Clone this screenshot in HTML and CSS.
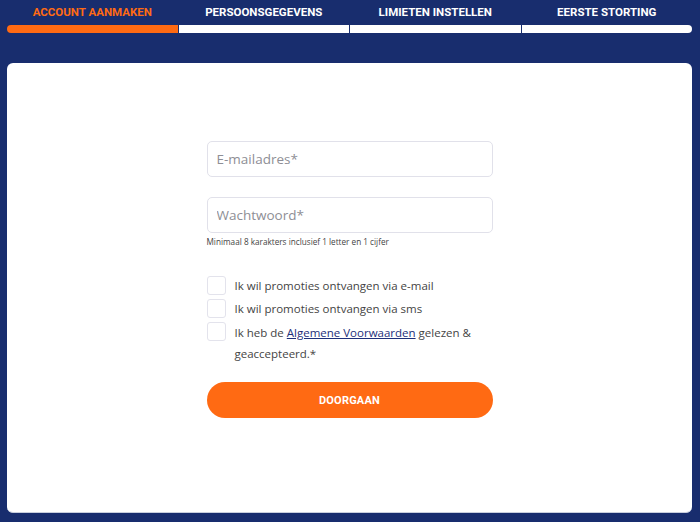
FILE: index.html
```html
<!DOCTYPE html>
<html lang="nl">
<head>
<meta charset="utf-8">
<title>Account aanmaken</title>
<link rel="stylesheet" href="styles.css">
</head>
<body>
<div class="page">
  <nav class="steps">
    <div class="step active"><span class="step-label">ACCOUNT AANMAKEN</span><span class="step-bar"></span></div>
    <div class="step"><span class="step-label">PERSOONSGEGEVENS</span><span class="step-bar"></span></div>
    <div class="step"><span class="step-label">LIMIETEN INSTELLEN</span><span class="step-bar"></span></div>
    <div class="step last"><span class="step-label">EERSTE STORTING</span><span class="step-bar"></span></div>
  </nav>
  <main class="card">
    <form class="form">
      <input class="field" type="email" placeholder="E-mailadres*">
      <input class="field field-pw" type="password" placeholder="Wachtwoord*">
      <p class="hint">Minimaal 8 karakters inclusief 1 letter en 1 cijfer</p>
      <div class="checks">
        <label class="check"><span class="box"></span><span class="check-text">Ik wil promoties ontvangen via e-mail</span></label>
        <label class="check"><span class="box"></span><span class="check-text">Ik wil promoties ontvangen via sms</span></label>
        <label class="check"><span class="box"></span><span class="check-text multi">Ik heb de <a href="#" class="link">Algemene Voorwaarden</a> gelezen &amp; geaccepteerd.*</span></label>
      </div>
      <button type="button" class="btn">DOORGAAN</button>
    </form>
  </main>
</div>
</body>
</html>
```
FILE: styles.css
```css
* { box-sizing: border-box; }
html, body { margin: 0; padding: 0; }
body {
  background: #182d6e;
  font-family: "Open Sans", "Liberation Sans", sans-serif;
  width: 700px;
  height: 522px;
  overflow: hidden;
}
.page { padding: 0 8px 0 7px; }
.steps {
  display: grid;
  grid-template-columns: repeat(4, 1fr);
  column-gap: 1px;
}
.step { display: flex; flex-direction: column; align-items: stretch; }
.step-label {
  height: 25px;
  line-height: 25px;
  text-align: center;
  color: #ffffff;
  font-family: "Roboto", "Liberation Sans", sans-serif;
  font-weight: 700;
  font-size: 11.5px;
}
.step.active .step-label { color: #ff6a13; }
.step-bar { height: 8px; background: #ffffff; }
.step.active .step-bar { background: #ff6a13; border-radius: 4px 0 0 4px; }
.step.last .step-bar { border-radius: 0 4px 4px 0; }
.card {
  margin-top: 30px;
  height: 450px;
  background: #ffffff;
  border-radius: 6px;
  border-bottom: 1px solid #c9cfdd;
  display: flex;
  justify-content: center;
  padding-top: 78px;
}
.form { width: 286px; display: flex; flex-direction: column; }
.field {
  height: 36px;
  border: 1px solid #e1e1ea;
  border-radius: 5px;
  padding: 0 9px;
  font-family: inherit;
  font-size: 13.5px;
  color: #333;
  outline: none;
}
.field::placeholder { color: #8e8e95; }
.field-pw { margin-top: 20px; }
.hint {
  margin: 3px 0 0 0;
  font-size: 8.2px;
  line-height: 12px;
  color: #444;
}
.checks { margin-top: 28px; display: flex; flex-direction: column; gap: 4px; }
.check { display: flex; align-items: flex-start; gap: 9px; }
.box {
  flex: none;
  width: 19px;
  height: 19px;
  border: 1px solid #e3e3ec;
  border-radius: 3px;
  background: #fff;
}
.check-text {
  font-size: 11.5px;
  line-height: 19px;
  color: #444;
}
.check-text.multi { line-height: 21px; }
.link { color: #1d2f7a; text-decoration: underline; }
.btn {
  margin-top: 18px;
  height: 36px;
  border: none;
  border-radius: 18px;
  background: #ff6a13;
  color: #ffffff;
  font-family: "Roboto", "Liberation Sans", sans-serif;
  font-weight: 700;
  font-size: 11px;
  letter-spacing: 0.2px;
}
```
